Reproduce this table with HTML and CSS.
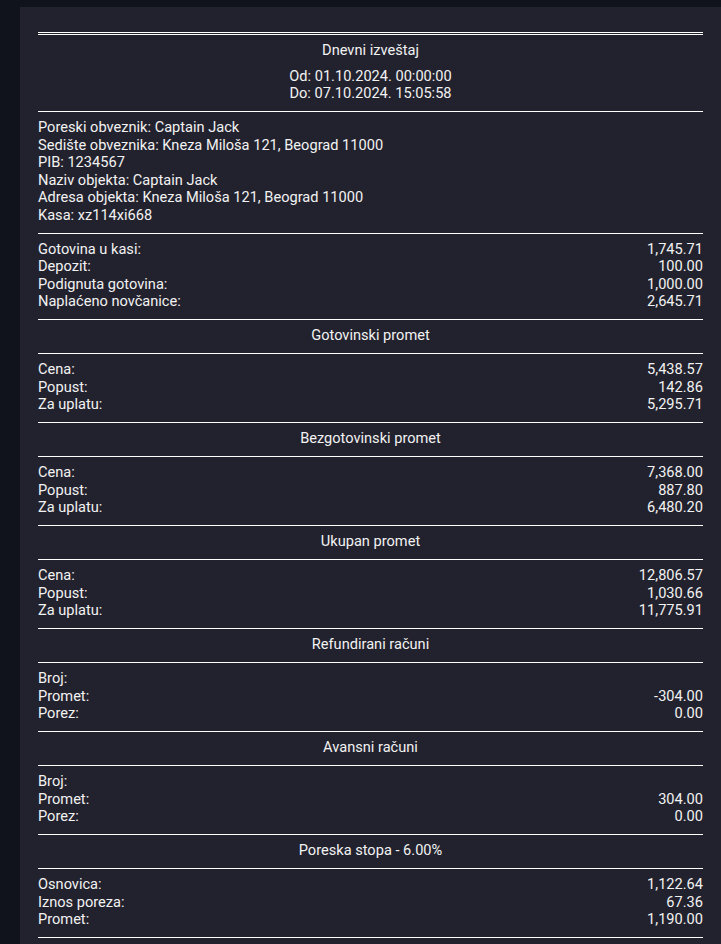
FILE: index.html
```html
<!DOCTYPE html>
<html lang="sr">
<head>
<meta charset="utf-8">
<title>Dnevni izveštaj</title>
<link rel="stylesheet" href="styles.css">
</head>
<body>
<div class="panel">
  <div class="report">
    <div class="sec header">
      <div class="title">Dnevni izveštaj</div>
      <div class="center">Od: 01.10.2024. 00:00:00</div>
      <div class="center">Do: 07.10.2024. 15:05:58</div>
    </div>
    <div class="sec">
      <div>Poreski obveznik: Captain Jack</div>
      <div>Sedište obveznika: Kneza Miloša 121, Beograd 11000</div>
      <div>PIB: 1234567</div>
      <div>Naziv objekta: Captain Jack</div>
      <div>Adresa objekta: Kneza Miloša 121, Beograd 11000</div>
      <div>Kasa: xz114xi668</div>
    </div>
    <div class="sec">
      <div class="row"><span>Gotovina u kasi:</span><span>1,745.71</span></div>
      <div class="row"><span>Depozit:</span><span>100.00</span></div>
      <div class="row"><span>Podignuta gotovina:</span><span>1,000.00</span></div>
      <div class="row"><span>Naplaćeno novčanice:</span><span>2,645.71</span></div>
    </div>
    <div class="sec center">Gotovinski promet</div>
    <div class="sec">
      <div class="row"><span>Cena:</span><span>5,438.57</span></div>
      <div class="row"><span>Popust:</span><span>142.86</span></div>
      <div class="row"><span>Za uplatu:</span><span>5,295.71</span></div>
    </div>
    <div class="sec center">Bezgotovinski promet</div>
    <div class="sec">
      <div class="row"><span>Cena:</span><span>7,368.00</span></div>
      <div class="row"><span>Popust:</span><span>887.80</span></div>
      <div class="row"><span>Za uplatu:</span><span>6,480.20</span></div>
    </div>
    <div class="sec center">Ukupan promet</div>
    <div class="sec">
      <div class="row"><span>Cena:</span><span>12,806.57</span></div>
      <div class="row"><span>Popust:</span><span>1,030.66</span></div>
      <div class="row"><span>Za uplatu:</span><span>11,775.91</span></div>
    </div>
    <div class="sec center">Refundirani računi</div>
    <div class="sec">
      <div class="row"><span>Broj:</span><span></span></div>
      <div class="row"><span>Promet:</span><span>-304.00</span></div>
      <div class="row"><span>Porez:</span><span>0.00</span></div>
    </div>
    <div class="sec center">Avansni računi</div>
    <div class="sec">
      <div class="row"><span>Broj:</span><span></span></div>
      <div class="row"><span>Promet:</span><span>304.00</span></div>
      <div class="row"><span>Porez:</span><span>0.00</span></div>
    </div>
    <div class="sec center">Poreska stopa - 6.00%</div>
    <div class="sec">
      <div class="row"><span>Osnovica:</span><span>1,122.64</span></div>
      <div class="row"><span>Iznos poreza:</span><span>67.36</span></div>
      <div class="row"><span>Promet:</span><span>1,190.00</span></div>
    </div>
    <div class="sec">
      <div class="row"><span>&nbsp;</span><span></span></div>
    </div>
  </div>
</div>
</body>
</html>
```
FILE: styles.css
```css
html, body {
  margin: 0;
  padding: 0;
  background: #10131c;
}
body {
  padding-top: 7px;
  padding-left: 20px;
  font-family: Roboto, "Liberation Sans", sans-serif;
  font-size: 14.6px;
  line-height: 17.5px;
  color: #f2f2f2;
}
.panel {
  background: #22222e;
  padding: 25px 18px 40px 18px;
  min-height: 1000px;
}
.report {
  border-top: 3px double #ffffff;
}
.sec {
  padding: 7px 0 8.5px 0;
  border-bottom: 1px solid #ffffff;
}
.header .title {
  text-align: center;
  margin-bottom: 8px;
}
.center {
  text-align: center;
}
.row {
  display: flex;
  justify-content: space-between;
}
```
